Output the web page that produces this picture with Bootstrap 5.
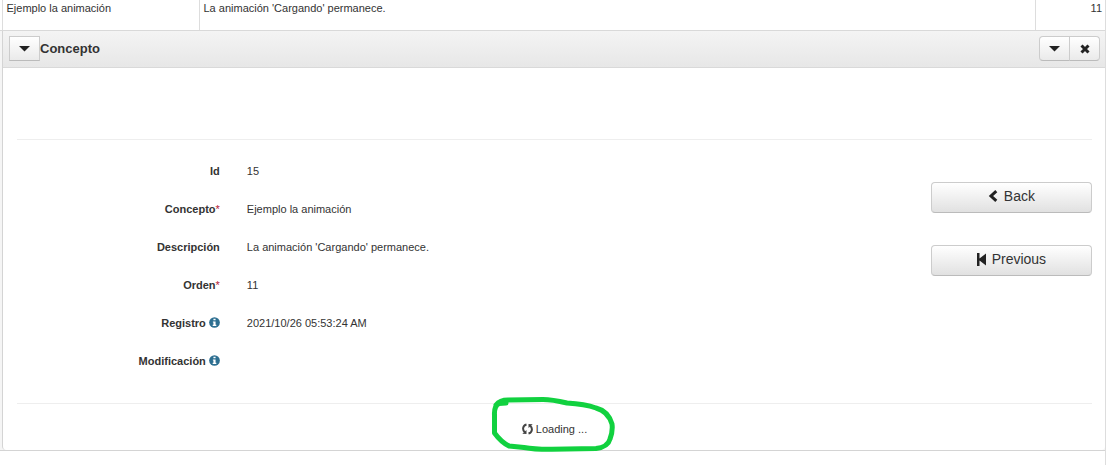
<!DOCTYPE html>
<html lang="es">
<head>
<meta charset="utf-8">
<meta name="viewport" content="width=device-width, initial-scale=1">
<title>Concepto</title>
<link rel="stylesheet" href="https://cdn.jsdelivr.net/npm/bootstrap@5.3.0/dist/css/bootstrap.min.css">
<style>
body{font-family:"Liberation Sans",Arial,sans-serif;font-size:11px;line-height:16px;color:#333;background:#fff;min-height:100vh}
.page-frame{flex:1;margin-right:6px;border-right:1px solid #ddd}
.grid-table{table-layout:fixed;width:100%;border-collapse:collapse;margin:0}
.grid-table td{height:30px;padding:0 4px;border-bottom:1px solid #d9d9d9;border-right:1px solid #ddd;vertical-align:top}
.grid-table td:last-child{border-right:0;padding-right:3px;text-align:right}
.gutter-col{width:2px}
.name-col{width:197px}
.order-col{width:70px}
.detail-wrap{padding-left:2px;background:#f5f5f5;border-bottom:1px solid #d4d4d4}
.detail-panel{background:#fff;border-left:1px solid #d4d4d4;border-radius:0 0 4px 4px}
.detail-head{height:37px;padding:0 5px 0 6px;background:linear-gradient(#f4f4f4,#e7e7e7);border-bottom:1px solid #d9d9d9}
.detail-head h1{font-size:13px;line-height:20px;font-weight:700;margin:0}
.btn-grad{--bs-btn-color:#333;--bs-btn-hover-color:#333;--bs-btn-border-color:#ccc;--bs-btn-hover-border-color:#bbb;--bs-btn-border-radius:4px;background:linear-gradient(#fff,#e1e1e1);border-bottom-color:#bbb;line-height:16px}
.btn-tool{width:31px;height:25px;padding:0;background:linear-gradient(#fff,#eaeaea);display:inline-flex;align-items:center;justify-content:center}
.btn-action{width:100%;height:31px;padding:0 0 2px;font-size:14px;display:flex;align-items:center;justify-content:center;gap:6px}
.detail-body{padding:71px 13px 0 14px}
.rule{border-top:1px solid #eee}
.field-list{padding:13px 0 22px}
.field-row{display:grid;grid-template-columns:22.2% 1fr;column-gap:27px;height:38px;padding-top:10px}
.field-row dt{text-align:right;font-weight:700}
.field-row dd{margin:0}
.with-info{display:flex;justify-content:end;align-items:start;gap:3px}
.req{color:#b31638;font-weight:400}
.actions{width:15%;padding-top:42px}
.actions .btn + .btn{margin-top:32px}
.loading-area{height:47px;padding-top:4px}
.loading-box{position:relative;gap:3px}
.marker{position:absolute;left:-32px;top:-25px;pointer-events:none}
svg{flex:none}
</style>
</head>
<body class="d-flex">
<main class="page-frame d-flex flex-column">
  <table class="grid-table">
    <colgroup><col class="gutter-col"><col class="name-col"><col><col class="order-col"></colgroup>
    <tbody><tr><td class="p-0"></td><td>Ejemplo la animación</td><td>La animación 'Cargando' permanece.</td><td>11</td></tr></tbody>
  </table>
  <div class="detail-wrap">
  <section class="detail-panel">
    <header class="detail-head d-flex align-items-center">
      <button type="button" class="btn btn-grad btn-tool rounded-0" aria-label="Menú"><svg width="11" height="6" viewBox="0 0 11 6"><path d="M0 0h11L5.500 5.500z" fill="#222"/></svg></button>
      <h1>Concepto</h1>
      <div class="btn-group ms-auto">
        <button type="button" class="btn btn-grad btn-tool" aria-label="Opciones"><svg width="11" height="6" viewBox="0 0 11 6"><path d="M0 0h11L5.500 5.500z" fill="#222"/></svg></button>
        <button type="button" class="btn btn-grad btn-tool" aria-label="Cerrar"><svg width="10" height="10" viewBox="0 0 10 10"><path d="M1.500 1.500l7 7M8.500 1.500l-7 7" stroke="#222" stroke-width="3"/></svg></button>
      </div>
    </header>
    <div class="detail-body">
      <div class="rule d-flex justify-content-between">
        <dl class="field-list flex-grow-1 mb-0">
          <div class="field-row"><dt>Id</dt><dd>15</dd></div>
          <div class="field-row"><dt>Concepto<span class="req">*</span></dt><dd>Ejemplo la animación</dd></div>
          <div class="field-row"><dt>Descripción</dt><dd>La animación 'Cargando' permanece.</dd></div>
          <div class="field-row"><dt>Orden<span class="req">*</span></dt><dd>11</dd></div>
          <div class="field-row"><dt class="with-info">Registro <svg width="11" height="15" viewBox="0 0 10 14"><circle cx="5" cy="7" r="5" fill="#2d6f91"/><path d="M4 3.500h2v1.500H4zM3.500 6H6v3h.7v1.200H3.300V9H4V7h-.5z" fill="#fff"/></svg></dt><dd>2021/10/26 05:53:24 AM</dd></div>
          <div class="field-row"><dt class="with-info">Modificación <svg width="11" height="15" viewBox="0 0 10 14"><circle cx="5" cy="7" r="5" fill="#2d6f91"/><path d="M4 3.500h2v1.500H4zM3.500 6H6v3h.7v1.200H3.300V9H4V7h-.5z" fill="#fff"/></svg></dt><dd></dd></div>
        </dl>
        <div class="actions">
          <button type="button" class="btn btn-grad btn-action"><svg width="10" height="12" viewBox="0 0 10 12"><path d="M8.300 1.200L3 6l5.300 4.800" fill="none" stroke="#222" stroke-width="3"/></svg>Back</button>
          <button type="button" class="btn btn-grad btn-action"><svg width="9" height="13" viewBox="0 0 9 13"><path d="M0 0h2.500v5.500L9 .5v12L2.500 7.500V13H0z" fill="#222"/></svg>Previous</button>
        </div>
      </div>
      <div class="rule loading-area d-flex align-items-center justify-content-center">
        <div class="loading-box d-flex align-items-center" role="status">
          <svg width="11" height="12" viewBox="0 0 11 12"><g fill="none" stroke="#444" stroke-width="2"><path d="M4.500 1.500C.5 2.500.2 7 2.800 9.300"/><path d="M6.500 10.500C10.500 9.500 10.800 5 8.200 2.700"/></g><path d="M.3 10.800L4.500 11V7zM10.700 1.200L6.500 1v4z" fill="#444"/></svg>Loading ...
          <svg class="marker" width="126" height="58" viewBox="490 396 126 58" aria-hidden="true"><path d="M506 403L499 403.500Q494 406 494.500 415L494.500 433Q501 442 509 446L524 447.500Q535 449.500 552 449.300L596 448.500Q608 447 610 439Q613 431 612 424Q608 411 596 408Q585 404 567 403Q552 399.500 543 399.500L508 400Q500 400 496 405" fill="none" stroke="#11d13f" stroke-width="5" stroke-linecap="round" stroke-linejoin="round"/></svg>
        </div>
      </div>
    </div>
  </section>
  </div>
</main>
<script src="https://cdn.jsdelivr.net/npm/bootstrap@5.3.0/dist/js/bootstrap.bundle.min.js"></script>
</body>
</html>
